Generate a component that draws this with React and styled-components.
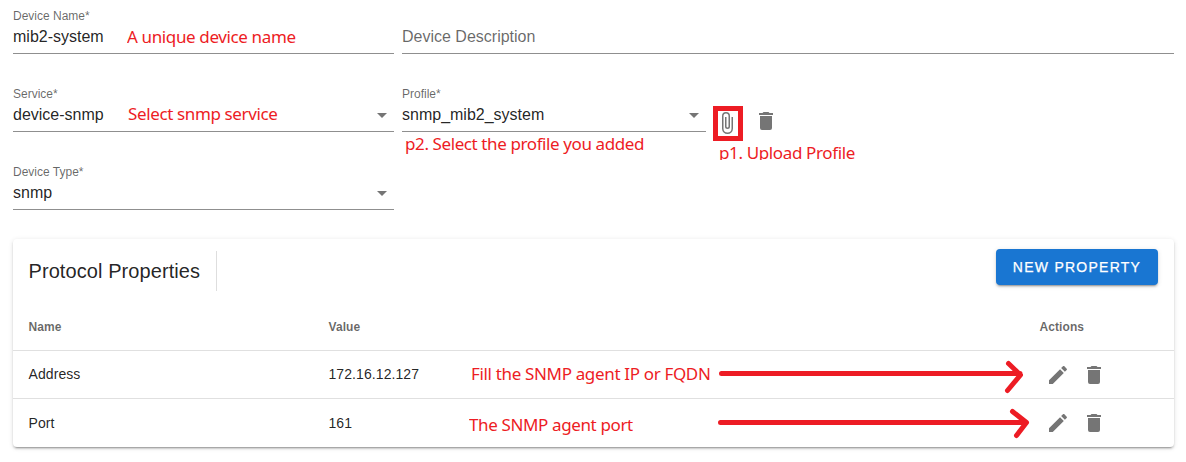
import React from 'react';
import styled, { createGlobalStyle } from 'styled-components';

const GlobalStyle = createGlobalStyle`
  *, *::before, *::after { box-sizing: border-box; }
  body {
    margin: 0;
    background: #fff;
    color: rgba(0, 0, 0, 0.87);
    font-family: "Liberation Sans", Arial, sans-serif;
  }
`;

const Page = styled.main`
  position: relative;
  width: 1186px;
  height: 462px;
  padding: 6px 12px 0 13px;
  overflow: hidden;
`;

const Form = styled.form`
  display: flex;
  flex-direction: column;
  gap: 30px;
`;

const FormRow = styled.div`
  display: flex;
  gap: 8px;
  height: 48px;
`;

const Field = styled.div`
  display: flex;
  flex-direction: column;
  width: ${(p) => p.$width}px;
  height: 48px;
  border-bottom: 1px solid #8f8f8f;
`;

const Label = styled.label`
  height: 20px;
  font-size: 12px;
  line-height: 20px;
  color: rgba(0, 0, 0, 0.6);
`;

const Control = styled.div`
  display: flex;
  align-items: center;
  justify-content: space-between;
  height: 22px;
  padding-right: 7px;
  font-size: 16px;
  line-height: 22px;
  color: ${(p) => (p.$placeholder ? 'rgba(0, 0, 0, 0.6)' : 'rgba(0, 0, 0, 0.87)')};
`;

const Caret = styled.span`
  border: 5px solid transparent;
  border-top-color: #757575;
  border-bottom: 0;
`;

const ProfileActions = styled.div`
  display: flex;
  align-items: flex-start;
  gap: 15px;
  padding: 25px 0 0 1px;
`;

const ClipSlot = styled.span`
  display: flex;
  padding-top: 2px;
`;

const Icon = styled.svg`
  display: block;
  width: 24px;
  height: 24px;
  fill: #757575;
`;

const Card = styled.section`
  width: 1161px;
  height: 208px;
  margin-top: 29px;
  border-radius: 4px;
  background: #fff;
  box-shadow: 0 3px 1px -2px rgba(0, 0, 0, 0.2), 0 2px 2px 0 rgba(0, 0, 0, 0.14),
    0 1px 5px 0 rgba(0, 0, 0, 0.12);
`;

const Toolbar = styled.header`
  display: flex;
  align-items: center;
  justify-content: space-between;
  height: 64px;
  padding: 0 16px 0 15.5px;
`;

const Title = styled.h2`
  height: 40px;
  width: 188.5px;
  margin: 0;
  border-right: 1px solid #dedede;
  font-size: 20px;
  font-weight: 400;
  line-height: 40px;
  letter-spacing: 0.08px;
  white-space: nowrap;
`;

const Button = styled.button`
  width: 162px;
  height: 36px;
  margin-top: -8px;
  padding: 0;
  border: 0;
  border-radius: 4px;
  background: #1976d2;
  color: #fff;
  font: 500 14px/36px "Liberation Sans", Arial, sans-serif;
  letter-spacing: 1.25px;
  -webkit-text-stroke: 0.25px #fff;
  box-shadow: 0 3px 1px -2px rgba(0, 0, 0, 0.2), 0 2px 2px 0 rgba(0, 0, 0, 0.14),
    0 1px 5px 0 rgba(0, 0, 0, 0.12);
`;

const Row = styled.div`
  display: grid;
  grid-template-columns: 300px 1fr 134.5px;
  align-items: center;
  height: 48px;
  padding: 0 0 0 15.5px;
  border-bottom: ${(p) => (p.$last ? '0' : '1px solid #e0e0e0')};
  font-size: ${(p) => (p.$head ? 12 : 14)}px;
  font-weight: ${(p) => (p.$head ? 700 : 400)};
  line-height: ${(p) => (p.$head ? 'normal' : '17px')};
  letter-spacing: 0.08px;
  color: ${(p) => (p.$head ? 'rgba(0, 0, 0, 0.6)' : 'rgba(0, 0, 0, 0.87)')};
`;

const RowActions = styled.span`
  display: flex;
  align-self: start;
  gap: 12px;
  padding: 12px 0 0 6.5px;
`;

const Note = styled.span`
  position: absolute;
  left: ${(p) => p.$x}px;
  top: ${(p) => p.$y}px;
  height: ${(p) => p.$height || 24}px;
  overflow: hidden;
  color: #ed1c24;
  font: 400 17px/24px "Noto Sans", "Open Sans", sans-serif;
  letter-spacing: ${(p) => p.$spacing || -0.37}px;
  white-space: nowrap;
`;

const Highlight = styled.span`
  position: absolute;
  left: 713px;
  top: 106px;
  width: 30px;
  height: 35px;
  border: 5px solid #ed1c24;
`;

const Arrows = styled.svg`
  position: absolute;
  left: 715px;
  top: 355px;
  fill: none;
  stroke: #ed1c24;
  stroke-width: 5;
  stroke-linecap: round;
  stroke-linejoin: round;
`;

const Trash = () => (
  <Icon viewBox="0 0 24 24">
    <path d="M19,4H15.5L14.5,3H9.5L8.5,4H5V6H19M6,19A2,2 0 0,0 8,21H16A2,2 0 0,0 18,19V7H6V19Z" />
  </Icon>
);

const Pencil = () => (
  <Icon viewBox="0 0 24 24">
    <path d="M20.71,7.04C21.1,6.65 21.1,6 20.71,5.63L18.37,3.29C18,2.9 17.35,2.9 16.96,3.29L15.12,5.12L18.87,8.87M3,17.25V21H6.75L17.81,9.93L14.06,6.18L3,17.25Z" />
  </Icon>
);

const Paperclip = () => (
  <Icon viewBox="0 0 24 24">
    <path d="M16.5,6V17.5A4,4 0 0,1 12.5,21.5A4,4 0 0,1 8.5,17.5V5A2.5,2.5 0 0,1 11,2.5A2.5,2.5 0 0,1 13.5,5V15.5A1,1 0 0,1 12.5,16.5A1,1 0 0,1 11.5,15.5V6H10V15.5A2.5,2.5 0 0,0 12.5,18A2.5,2.5 0 0,0 15,15.5V5A4,4 0 0,0 11,1A4,4 0 0,0 7,5V17.5A5.5,5.5 0 0,0 12.5,23A5.5,5.5 0 0,0 18,17.5V6H16.5Z" />
  </Icon>
);

const SelectField = ({ label, value, width }) => (
  <Field $width={width}>
    <Label>{label}</Label>
    <Control>
      {value}
      <Caret />
    </Control>
  </Field>
);

const properties = [
  { name: 'Address', value: '172.16.12.127' },
  { name: 'Port', value: '161' },
];

export default function App() {
  return (
    <Page>
      <GlobalStyle />
      <Form>
        <FormRow>
          <Field $width={381}>
            <Label>Device Name*</Label>
            <Control>mib2-system</Control>
          </Field>
          <Field $width={772}>
            <Label />
            <Control $placeholder>Device Description</Control>
          </Field>
        </FormRow>
        <FormRow>
          <SelectField label="Service*" value="device-snmp" width={381} />
          <SelectField label="Profile*" value="snmp_mib2_system" width={304} />
          <ProfileActions>
            <ClipSlot>
              <Paperclip />
            </ClipSlot>
            <Trash />
          </ProfileActions>
        </FormRow>
        <FormRow>
          <SelectField label="Device Type*" value="snmp" width={381} />
        </FormRow>
      </Form>

      <Card>
        <Toolbar>
          <Title>Protocol Properties</Title>
          <Button type="button">NEW PROPERTY</Button>
        </Toolbar>
        <Row $head>
          <span>Name</span>
          <span>Value</span>
          <span>Actions</span>
        </Row>
        {properties.map((item, i) => (
          <Row key={item.name} $last={i === properties.length - 1}>
            <span>{item.name}</span>
            <span>{item.value}</span>
            <RowActions>
              <Pencil />
              <Trash />
            </RowActions>
          </Row>
        ))}
      </Card>

      <Note $x={127} $y={25}>A unique device name</Note>
      <Note $x={128} $y={102}>Select snmp service</Note>
      <Note $x={405} $y={132} $spacing={-0.4}>p2. Select the profile you added</Note>
      <Note $x={719} $y={141} $height={19}>p1. Upload Profile</Note>
      <Note $x={471} $y={362} $spacing={-0.34}>Fill the SNMP agent IP or FQDN</Note>
      <Note $x={469} $y={413}>The SNMP agent port</Note>
      <Highlight />
      <Arrows width="320" height="90" viewBox="715 355 320 90">
        <path d="M721.5 373.5H1020M1008.5 363.5L1020.5 375L1007.5 390.5" />
        <path d="M720.5 422.5H1026M1012.5 411.5L1026.5 422.5L1016.5 435.5" />
      </Arrows>
    </Page>
  );
}
